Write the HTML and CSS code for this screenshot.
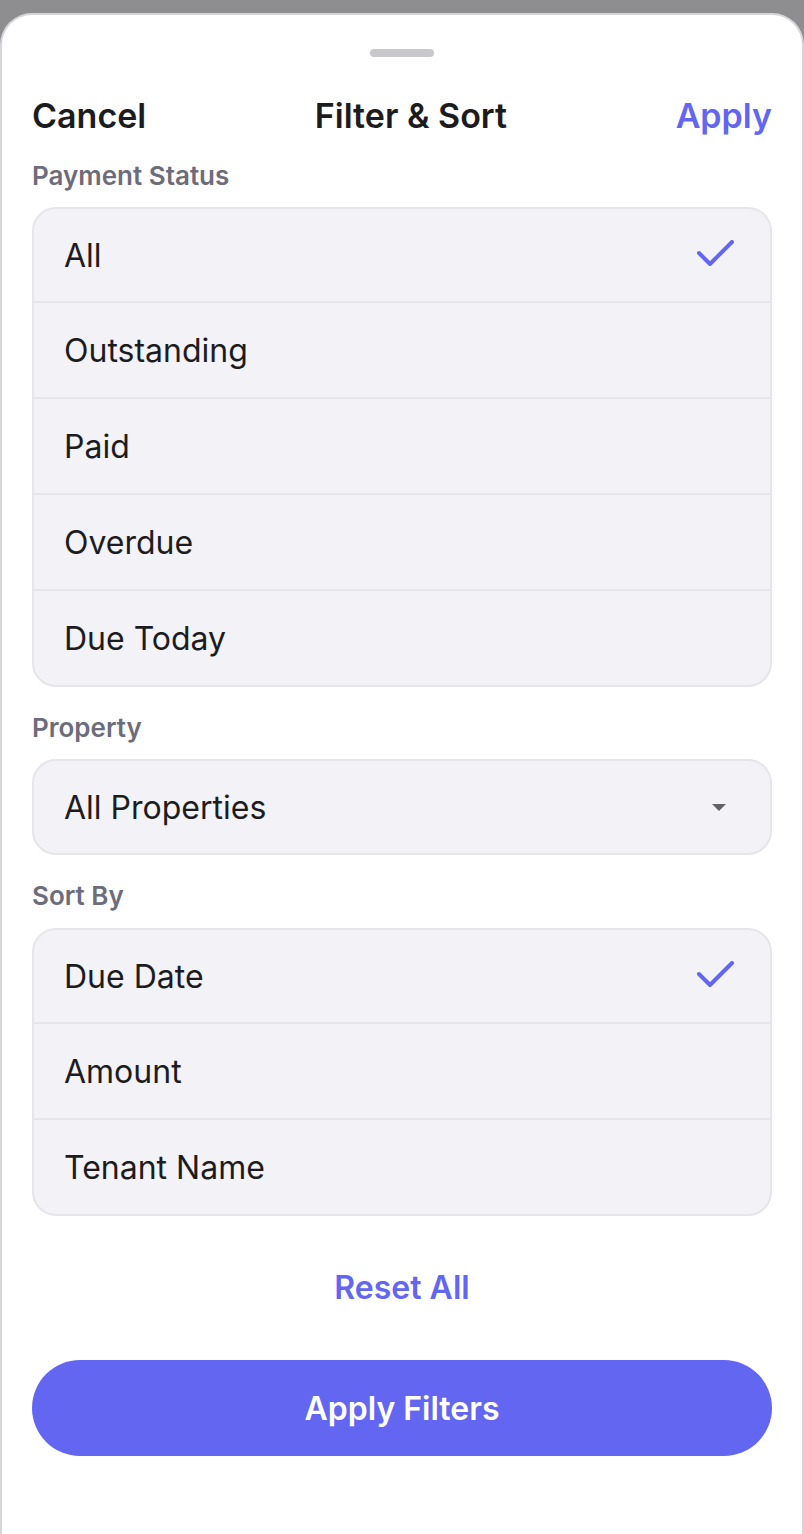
FILE: index.html
```html
<!DOCTYPE html>
<html lang="en">
<head>
    <meta charset="UTF-8">
    <meta name="viewport" content="width=device-width, initial-scale=1.0">
    <title>Filter &amp; Sort</title>
    <link rel="stylesheet" href="styles.css">
</head>
<body>
    <main class="sheet">
        <!-- 拖动条 -->
        <div class="handle"></div>

        <header class="top-bar">
            <span class="cancel">Cancel</span>
            <span class="title">Filter &amp; Sort</span>
            <span class="apply">Apply</span>
        </header>

        <h2 class="label">Payment Status</h2>
        <ul class="group">
            <li class="row">All
                <svg class="check" viewBox="0 0 40 30" width="40" height="30"><polyline points="3,13 14,24 36,2" fill="none" stroke="#6366f1" stroke-width="4" stroke-linecap="round" stroke-linejoin="round"/></svg>
            </li>
            <li class="row">Outstanding</li>
            <li class="row">Paid</li>
            <li class="row">Overdue</li>
            <li class="row">Due Today</li>
        </ul>

        <h2 class="label">Property</h2>
        <div class="select">
            All Properties
            <span class="caret"></span>
        </div>

        <h2 class="label">Sort By</h2>
        <ul class="group">
            <li class="row">Due Date
                <svg class="check" viewBox="0 0 40 30" width="40" height="30"><polyline points="3,13 14,24 36,2" fill="none" stroke="#6366f1" stroke-width="4" stroke-linecap="round" stroke-linejoin="round"/></svg>
            </li>
            <li class="row">Amount</li>
            <li class="row">Tenant Name</li>
        </ul>

        <div class="reset">Reset All</div>
        <button class="apply-btn">Apply Filters</button>
    </main>
</body>
</html>
```

FILE: styles.css
```css
html,body{
    margin: 0;
    padding: 0;
    height: 100%;
    background-color: #8e8e90;
}
body{
    padding-top: 13px;
    box-sizing: border-box;
    font-family: Inter, "Noto Sans", sans-serif;
    color: #1c1c1e;
}
.sheet{
    display: flex;
    flex-direction: column;
    background: #fff;
    border: 2px solid #d6d6da;
    border-bottom: none;
    border-radius: 32px 32px 0 0;
    padding: 0 30px;
    height: 100%;
    box-sizing: border-box;
}
.handle{
    width: 64px;
    height: 8px;
    border-radius: 4px;
    background: #c7c7cc;
    margin: 34px auto 0;
}
.top-bar{
    display: flex;
    justify-content: space-between;
    align-items: center;
    height: 64px;
    margin-top: 26px;
    font-size: 34px;
    font-weight: 600;
}
.apply{
    color: #6366f1;
}
.label{
    margin: 25px 0 16px;
    font-size: 26px;
    line-height: 32px;
    font-weight: 600;
    color: #6c6c7a;
}
.top-bar + .label{
    margin-top: 13px;
}
ul,li{
    margin: 0;
    padding: 0;
    list-style: none;
}
.group{
    background: #f2f2f7;
    border: 2px solid #e5e5ea;
    border-radius: 24px;
    overflow: hidden;
}
.top-bar + .label + .group{
    margin-top: -1px;
}
.row{
    display: flex;
    align-items: center;
    justify-content: space-between;
    height: 94px;
    padding: 0 34px 0 30px;
    font-size: 32px;
}
/* 第一行略矮一点 */
.row:first-child{
    height: 92px;
}
.row + .row{
    border-top: 2px solid #e5e5ea;
}
.select{
    display: flex;
    align-items: center;
    justify-content: space-between;
    height: 92px;
    padding: 0 44px 0 30px;
    background: #f2f2f7;
    border: 2px solid #e5e5ea;
    border-radius: 24px;
    font-size: 32px;
}
.label + .select{
    margin-top: -1px;
}
.caret{
    width: 0;
    height: 0;
    border-left: 7px solid transparent;
    border-right: 7px solid transparent;
    border-top: 7px solid #636366;
}
.reset{
    margin-top: 52px;
    text-align: center;
    font-size: 32px;
    line-height: 40px;
    font-weight: 600;
    color: #6366f1;
}
.apply-btn{
    margin-top: 52px;
    height: 96px;
    border: none;
    border-radius: 48px;
    background: #6366f1;
    color: #fff;
    font-family: inherit;
    font-size: 32px;
    font-weight: 600;
}
```
